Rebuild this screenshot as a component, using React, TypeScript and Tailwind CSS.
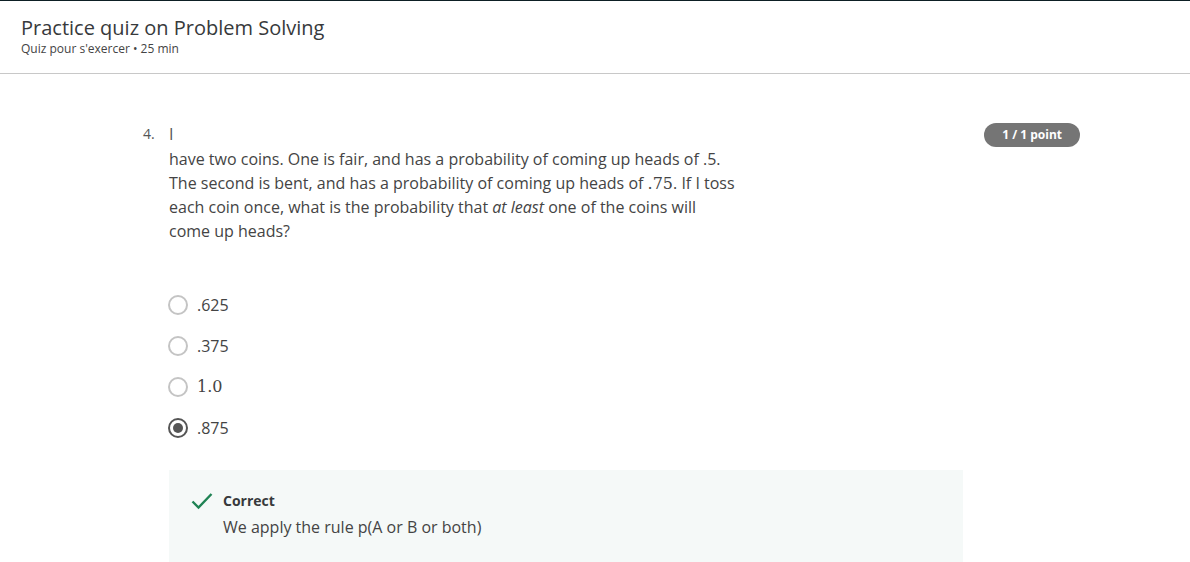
import React from 'react';

const options = [
  { label: '.625', serif: false, checked: false },
  { label: '.375', serif: false, checked: false },
  { label: '1.0', serif: true, checked: false },
  { label: '.875', serif: false, checked: true },
];

const Radio = ({ checked }: { checked: boolean }) =>
  checked ? (
    <span className="w-[20px] h-[20px] rounded-full border-[2px] border-[#555] flex items-center justify-center shrink-0">
      <span className="w-[10px] h-[10px] rounded-full bg-[#555]" />
    </span>
  ) : (
    <span className="w-[20px] h-[20px] rounded-full border-[2px] border-[#c4c4c4] shrink-0" />
  );

export default function App() {
  return (
    <div className="w-[1190px] h-[562px] overflow-hidden bg-white text-[#373a3c] font-['Open_Sans',sans-serif] border-t border-[#0d1f24]">
      <header className="h-[73px] border-b border-[#c8c8c8] px-[21px] pt-[13px]">
        <h1 className="text-[20px] leading-[27px] text-[#373a3c]">Practice quiz on Problem Solving</h1>
        <p className="text-[12px] leading-[16px] text-[#444]">Quiz pour s'exercer • 25 min</p>
      </header>

      <main className="flex pl-[143px] pr-[110px] pt-[49px]">
        <div className="flex-1">
          <div className="flex">
            <span className="w-[26px] text-[14px] leading-[22px] text-[#555]">4.</span>
            <div className="w-[572px] text-[16px] leading-[24px] text-[#444]">
              <div className="leading-[22px] text-[#555]">I</div>
              <p className="pt-[2px]">
                have two coins. One is fair, and has a probability of coming up heads of .5. The second is bent, and has a probability of coming up heads of{' '}
                <span className="font-['DejaVu_Serif',serif] text-[16px] leading-none">.75</span>. If I toss each coin once, what is the probability that{' '}
                <em>at least</em> one of the coins will come up heads?
              </p>
            </div>
          </div>

          <div className="pl-[25px] pt-[50px] flex flex-col gap-[17px]">
            {options.map(o => (
              <label key={o.label} className="flex items-center gap-[9px] h-[24px]">
                <Radio checked={o.checked} />
                <span
                  className={
                    o.serif
                      ? "font-['DejaVu_Serif',serif] text-[16px] text-[#444]"
                      : 'text-[16px] text-[#444]'
                  }
                >
                  {o.label}
                </span>
              </label>
            ))}
          </div>

          <div className="ml-[26px] mt-[30px] w-[794px] h-[100px] bg-[#f5f9f8] pl-[22px] pt-[20px]">
            <div className="flex items-center gap-[10px]">
              <svg width="22" height="18" viewBox="0 0 22 18" fill="none">
                <path d="M1.5 9.5 L7.5 15.5 L20.5 2" stroke="#1f8354" strokeWidth="2.4" />
              </svg>
              <span className="text-[14px] font-bold text-[#373a3c]">Correct</span>
            </div>
            <p className="pl-[32px] pt-[4px] text-[16px] leading-[24px] text-[#444]">We apply the rule p(A or B or both)</p>
          </div>
        </div>

        <div className="-mt-[2px]">
          <span className="inline-flex items-center h-[24px] px-[18px] rounded-full bg-[#757575] text-white text-[12px] font-bold">
            1 / 1 point
          </span>
        </div>
      </main>
    </div>
  );
}
